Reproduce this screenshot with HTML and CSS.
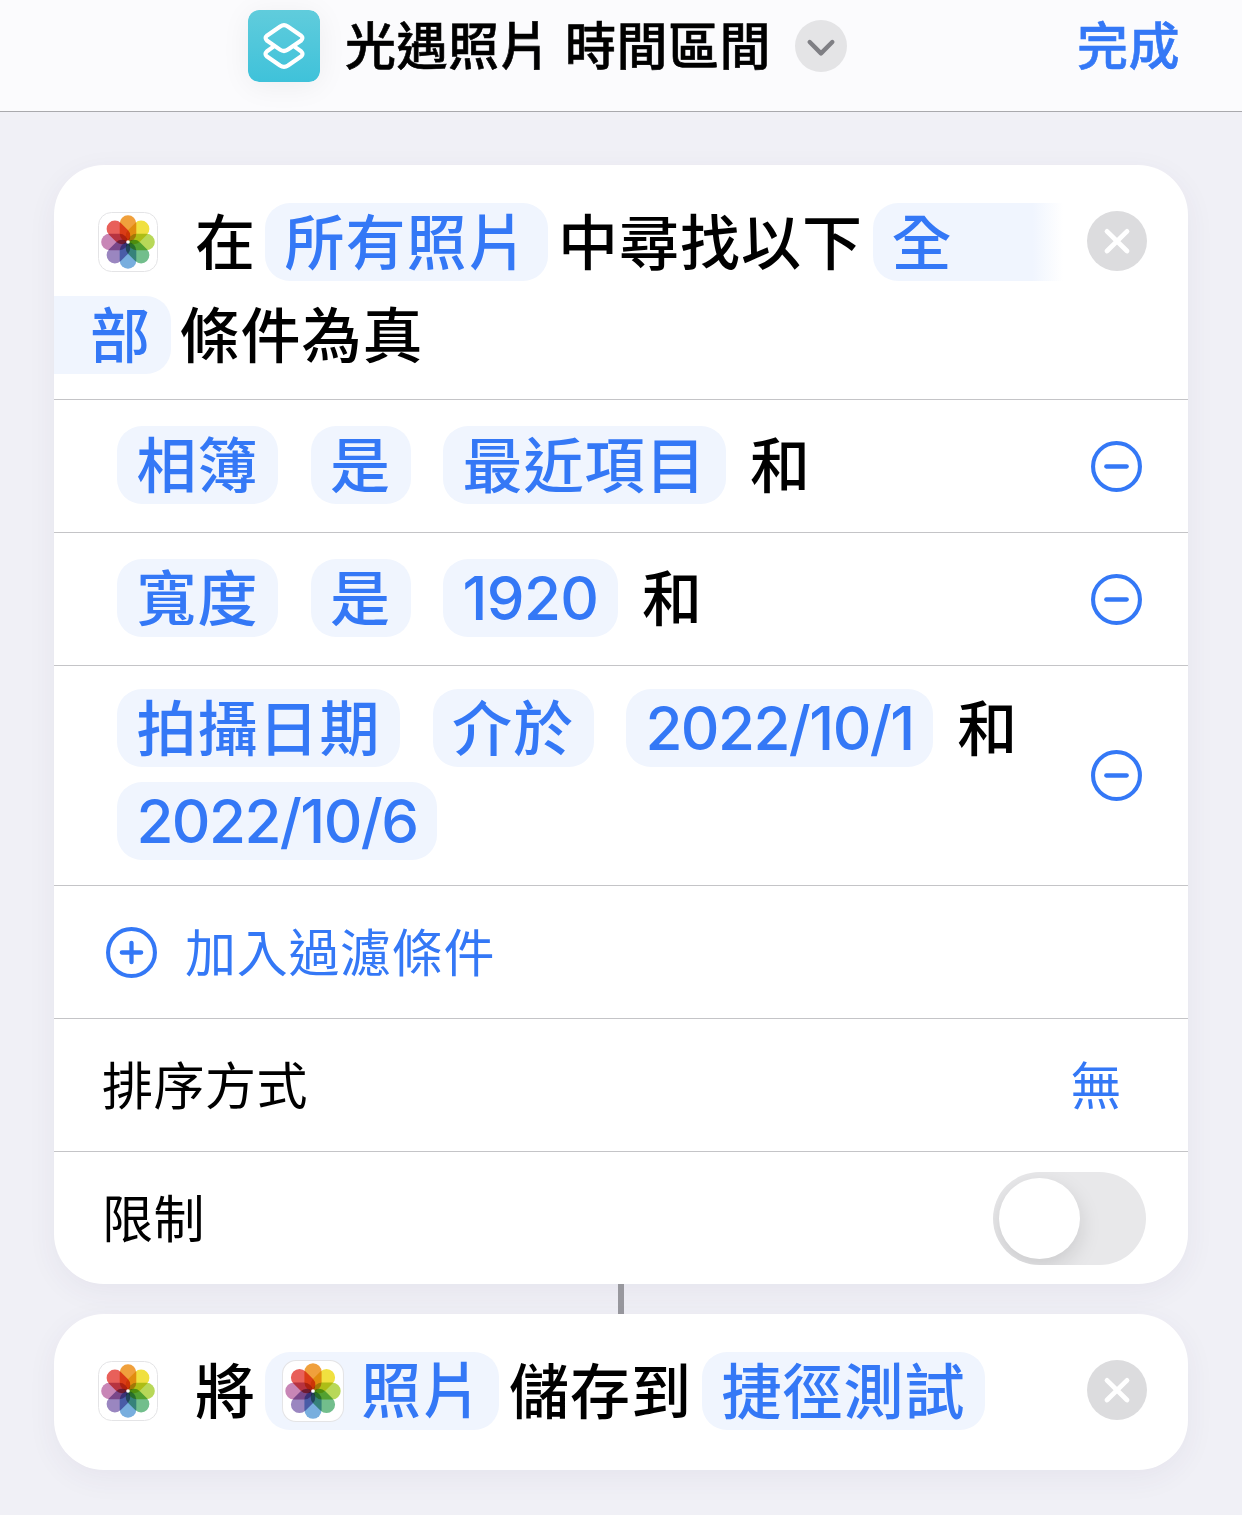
FILE: index.html
```html
<!DOCTYPE html>
<html lang="zh-Hant">
<head>
  <meta charset="UTF-8" />
  <meta name="viewport" content="width=device-width, initial-scale=1.0"/>
  <title>光遇照片 時間區間</title>
  <link rel="stylesheet" href="styles.css">
</head>
<body>
  <!-- shared icons -->
  <svg class="defs" width="0" height="0">
    <defs>
      <linearGradient id="tile" x1="0" y1="0" x2="0" y2="1">
        <stop offset="0" stop-color="#60ccdc"/>
        <stop offset="1" stop-color="#3fc2da"/>
      </linearGradient>
      <symbol id="photos" viewBox="0 0 60 60">
        <rect x="0.5" y="0.5" width="59" height="59" rx="13" fill="#fff" stroke="#e4e4e6"/>
        <g class="petals">
          <rect x="21.7" y="3.2" width="16.6" height="26.6" rx="8.3" fill="#f0a03c"/>
          <rect x="21.7" y="3.2" width="16.6" height="26.6" rx="8.3" fill="#f0e040" transform="rotate(45 30 30)"/>
          <rect x="21.7" y="3.2" width="16.6" height="26.6" rx="8.3" fill="#b8d858" transform="rotate(90 30 30)"/>
          <rect x="21.7" y="3.2" width="16.6" height="26.6" rx="8.3" fill="#72be8c" transform="rotate(135 30 30)"/>
          <rect x="21.7" y="3.2" width="16.6" height="26.6" rx="8.3" fill="#78aede" transform="rotate(180 30 30)"/>
          <rect x="21.7" y="3.2" width="16.6" height="26.6" rx="8.3" fill="#9a86c0" transform="rotate(225 30 30)"/>
          <rect x="21.7" y="3.2" width="16.6" height="26.6" rx="8.3" fill="#c886b6" transform="rotate(270 30 30)"/>
          <rect x="21.7" y="3.2" width="16.6" height="26.6" rx="8.3" fill="#e8605a" transform="rotate(315 30 30)"/>
        </g>
        <circle cx="30" cy="30" r="1.8" fill="#fff"/>
      </symbol>
      <symbol id="close" viewBox="0 0 60 60">
        <circle cx="30" cy="30" r="30" fill="#dcdcde"/>
        <path d="M20 20.4L40 40M40 20.4L20 40" stroke="#fff" stroke-width="4.8" stroke-linecap="round"/>
      </symbol>
      <symbol id="minus" viewBox="0 0 52 52">
        <circle cx="26" cy="26" r="23" fill="none" stroke="#3478f6" stroke-width="4"/>
        <path d="M16 26H36" stroke="#3478f6" stroke-width="4.2" stroke-linecap="round"/>
      </symbol>
      <symbol id="plus" viewBox="0 0 52 52">
        <circle cx="26" cy="26" r="23" fill="none" stroke="#3478f6" stroke-width="4"/>
        <path d="M16.5 26H35.5M26 16.5V35.5" stroke="#3478f6" stroke-width="4.2" stroke-linecap="round"/>
      </symbol>
    </defs>
  </svg>

  <header class="navbar">
    <div class="title">
      <svg class="app-icon" viewBox="0 0 72 72">
        <rect width="72" height="72" rx="11" fill="url(#tile)"/>
        <g fill="none" stroke="#fff" stroke-width="4.2" stroke-linejoin="round">
          <path d="M25.5 36.6L19 41.2Q16 44 19 46.6L32 55.6Q36 58.2 40 55.6L53 46.6Q56 44 53 41.2L46.5 36.6"/>
          <path d="M32.2 16.4Q36 13.8 39.8 16.4L52.8 25.4Q56 28 52.8 30.8L40 39.6Q36 42.4 32 39.6L19.2 30.8Q16 28 19.2 25.4Z"/>
        </g>
      </svg>
      <h1>光遇照片 時間區間</h1>
      <svg class="chevron" viewBox="0 0 52 52">
        <circle cx="26" cy="26" r="26" fill="#e4e4e6"/>
        <path d="M14.7 22L26 33.4L37.3 22" fill="none" stroke="#7f7f84" stroke-width="4.4" stroke-linecap="round" stroke-linejoin="round"/>
      </svg>
    </div>
    <div class="done">完成</div>
  </header>

  <main class="actions">
    <section class="card">
      <div class="row find">
        <div class="line">
          <svg class="action-icon"><use href="#photos"/></svg>
          <span>在</span>
          <span class="pill">所有照片</span>
          <span>中尋找以下</span>
          <span class="pill pill-open">全</span>
          <svg class="close"><use href="#close"/></svg>
        </div>
        <div class="line second">
          <span class="pill pill-rest">部</span>
          <span>條件為真</span>
        </div>
      </div>
      <div class="row filter">
        <div class="terms">
          <span class="pill">相簿</span>
          <span class="pill">是</span>
          <span class="pill">最近項目</span>
          <span class="and">和</span>
        </div>
        <svg class="round"><use href="#minus"/></svg>
      </div>
      <div class="row filter">
        <div class="terms">
          <span class="pill">寬度</span>
          <span class="pill">是</span>
          <span class="pill num">1920</span>
          <span class="and">和</span>
        </div>
        <svg class="round"><use href="#minus"/></svg>
      </div>
      <div class="row filter tall">
        <div class="terms">
          <span class="pill">拍攝日期</span>
          <span class="pill">介於</span>
          <span class="pill num date">2022/10/1</span>
          <span class="and">和</span>
          <span class="pill num date">2022/10/6</span>
        </div>
        <svg class="round"><use href="#minus"/></svg>
      </div>
      <div class="row option add">
        <svg class="round"><use href="#plus"/></svg>
        <span>加入過濾條件</span>
      </div>
      <div class="row option">
        <span>排序方式</span>
        <span class="value">無</span>
      </div>
      <div class="row option">
        <span>限制</span>
        <div class="toggle"><div class="knob"></div></div>
      </div>
    </section>

    <div class="connector"></div>

    <section class="card save">
      <div class="line">
        <svg class="action-icon"><use href="#photos"/></svg>
        <span>將</span>
        <span class="pill with-icon"><svg><use href="#photos"/></svg>照片</span>
        <span>儲存到</span>
        <span class="pill">捷徑測試</span>
        <svg class="close"><use href="#close"/></svg>
      </div>
    </section>
  </main>
</body>
</html>
```

FILE: styles.css
```css
* {
  box-sizing: border-box;
}
body {
  margin: 0;
  height: 1515px;
  overflow: hidden;
  background: #f0f0f6;
  color: #000;
  font-family: Inter, "Noto Sans CJK TC", sans-serif;
}
svg {
  display: block;
  flex: none;
}
.defs { position: absolute; }
.petals rect { mix-blend-mode: multiply; }

.navbar {
  display: flex;
  justify-content: space-between;
  height: 112px;
  padding: 0 62px 0 248px;
  background: #fbfbfd;
  border-bottom: 1px solid #a9a9ad;
  font-size: 51px;
  letter-spacing: 0.5px;
  line-height: 92px;
}
.title {
  display: flex;
  align-items: center;
  height: 92px;
}
.app-icon {
  width: 72px;
  height: 72px;
  border-radius: 11px;
  box-shadow: 0 4px 30px rgba(0, 0, 0, 0.06);
}
h1 {
  width: 450px;
  margin: 0 0 0 25px;
  padding-top: 2px;
  font-size: inherit;
  font-weight: 500;
  white-space: nowrap;
}
h1, .done { -webkit-text-stroke: 0.6px; }
.chevron { width: 52px; height: 52px; }
.done {
  padding-top: 1px;
  color: #3478f6;
  font-weight: 500;
}

.actions { padding: 53px 54px 0; }
.card {
  background: #fff;
  border-radius: 50px;
  box-shadow: 0 8px 30px rgba(60, 50, 110, 0.06);
  font-size: 60px;
  font-weight: 500;
  letter-spacing: 1px;
  line-height: 80px;
}
.row + .row { border-top: 1px solid #c4c4c7; }
.line {
  display: flex;
  align-items: center;
  gap: 10px;
  height: 78px;
  white-space: nowrap;
}
.line span, .terms span { height: 78px; }
.second { gap: 9px; }
.find {
  display: flex;
  flex-direction: column;
  gap: 15px;
  height: 234px;
  padding-top: 38px;
}
.action-icon {
  width: 60px;
  height: 60px;
  margin: 0 27px 0 44px;
}
.action-icon + span { margin-right: -1px; }
.close {
  width: 60px;
  height: 60px;
  margin: 0 41px 2px auto;
}
.pill {
  padding: 0 19.5px;
  border-radius: 25px;
  background: #f0f5fe;
  color: #3478f6;
  white-space: nowrap;
}
/* one pill broken over two lines */
.pill-open {
  width: 190px;
  padding-left: 18.5px;
  border-radius: 25px 0 0 25px;
  background: linear-gradient(to right, #f0f5fe 84%, #fff);
}
.pill-rest {
  padding-left: 36px;
  border-radius: 0 25px 25px 0;
}

.filter {
  display: flex;
  align-items: center;
  justify-content: space-between;
  height: 133px;
  padding: 0 45px 0 63px;
}
.terms {
  display: flex;
  flex-wrap: wrap;
  gap: 15px 32.5px;
  width: 930px;
  padding-bottom: 2px;
}
.tall { height: 220px; }
.and { margin-left: -8.5px; }
.terms .num {
  letter-spacing: -0.6px;
  line-height: 78px;
}
.terms .date {
  letter-spacing: -1.6px;
}
.round { width: 53px; height: 53px; }

.option {
  display: flex;
  align-items: center;
  justify-content: space-between;
  height: 133px;
  padding: 0 42px 0 48px;
  font-size: 51px;
  font-weight: 400;
  letter-spacing: 0.5px;
}
.option span { padding-top: 4px; }
.add {
  justify-content: flex-start;
  gap: 27px;
  padding-left: 51px;
  color: #3478f6;
  letter-spacing: 0.7px;
}
.value { margin-right: 24px; color: #3478f6; }
.toggle {
  width: 153px;
  height: 93px;
  padding: 6px;
  border-radius: 47px;
  background: #e8e8ea;
  overflow: hidden;
}
.knob {
  width: 81px;
  height: 81px;
  border-radius: 50%;
  background: #fff;
  box-shadow: 0 8px 22px rgba(0, 0, 0, 0.13);
}

.connector {
  width: 6px;
  height: 30px;
  margin: 0 auto;
  background: #98989e;
}
.save { padding: 38px 0 40px; }
.with-icon {
  display: flex;
  align-items: center;
  gap: 17px;
  padding-left: 17px;
  padding-right: 16px;
}
.with-icon svg { width: 62px; height: 62px; }
```
